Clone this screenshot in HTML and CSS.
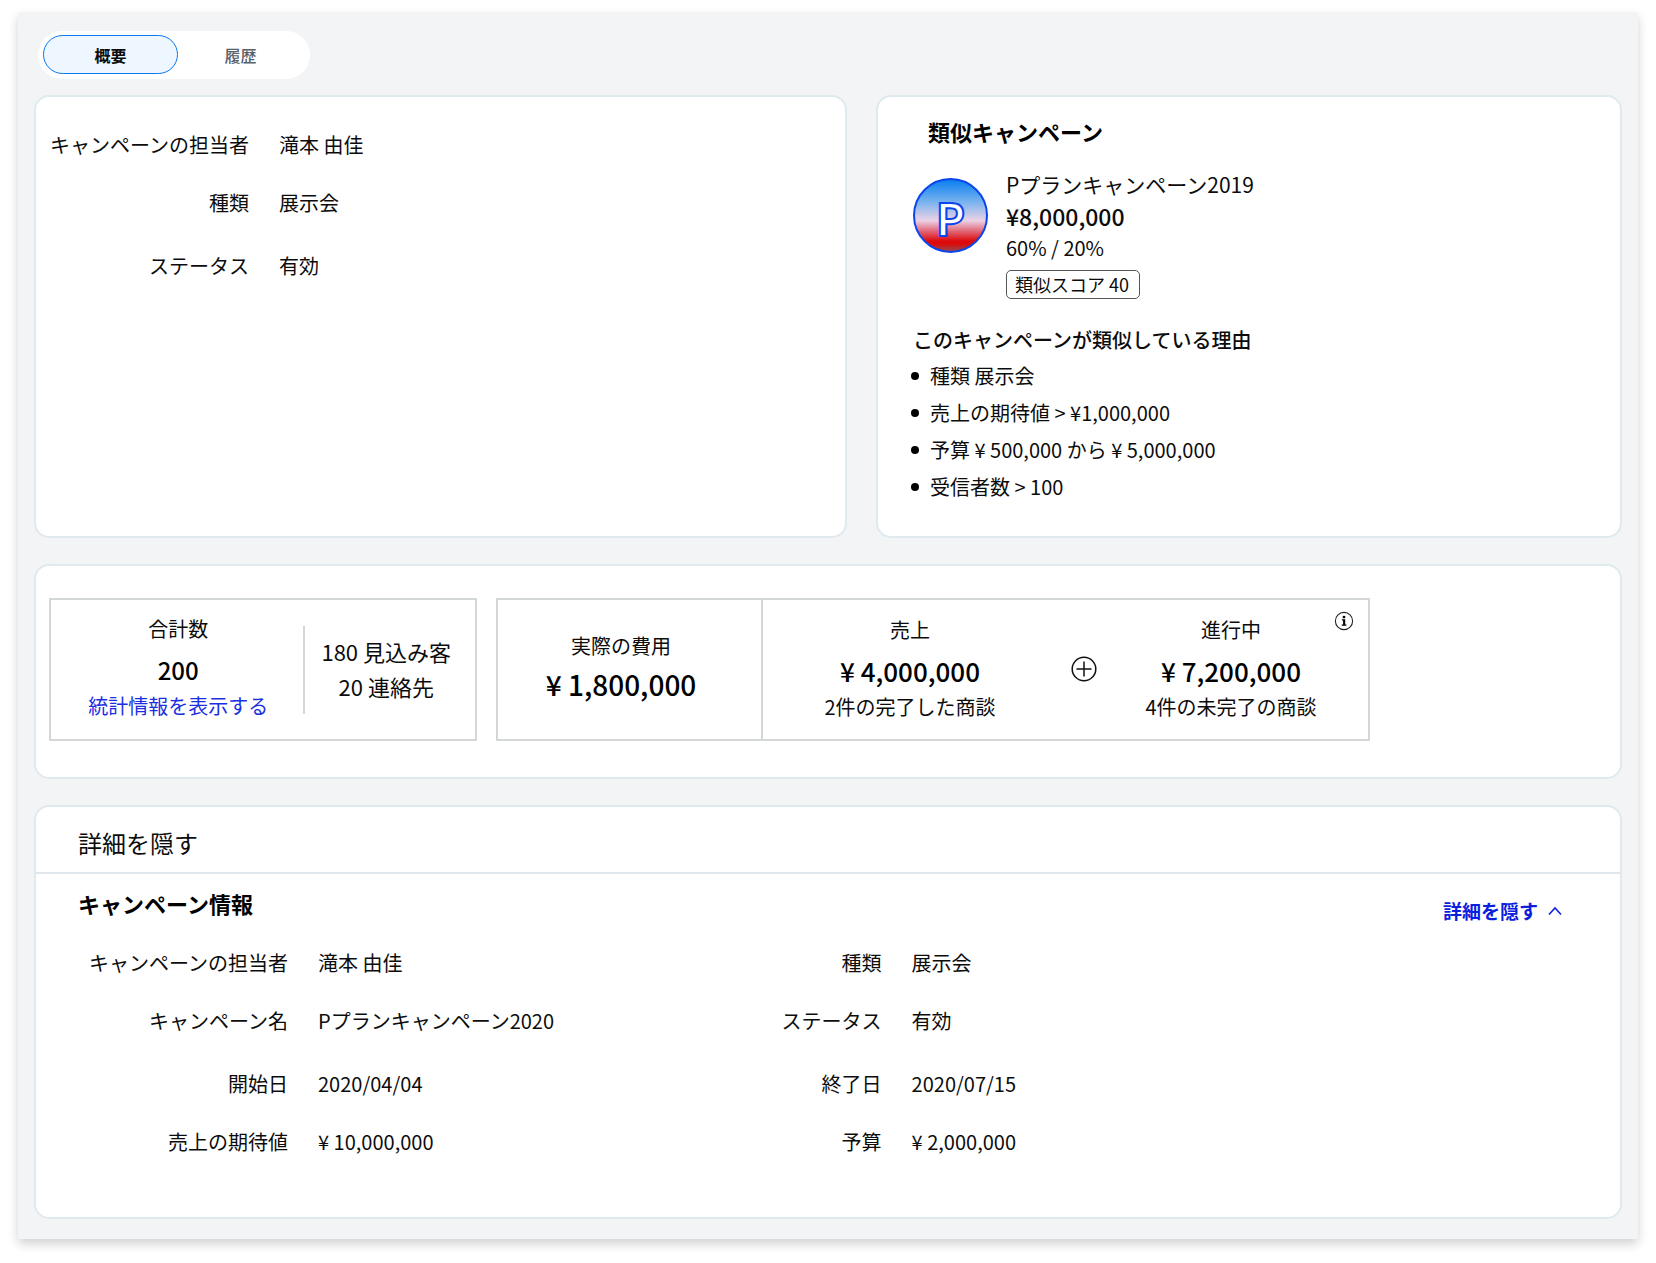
FILE: index.html
```html
<!DOCTYPE html>
<html lang="ja">
<head>
<meta charset="utf-8">
<meta name="viewport" content="width=device-width, initial-scale=1">
<title>キャンペーン概要</title>
<link rel="stylesheet" href="styles.css">
</head>
<body>
<main class="panel">
  <div class="tabs" role="tablist">
    <button class="tab tab-active" type="button" role="tab" aria-selected="true">概要</button>
    <button class="tab" type="button" role="tab" aria-selected="false">履歴</button>
  </div>

  <div class="overview">
    <section class="card summary">
      <dl class="fields">
        <dt>キャンペーンの担当者</dt><dd>滝本 由佳</dd>
        <dt>種類</dt><dd>展示会</dd>
        <dt>ステータス</dt><dd>有効</dd>
      </dl>
    </section>

    <section class="card similar">
      <h2 class="heading similar-title">類似キャンペーン</h2>
      <div class="campaign">
        <div class="avatar"><span>P</span></div>
        <div class="campaign-info">
          <p class="campaign-name">Pプランキャンペーン2019</p>
          <p class="campaign-amount">¥8,000,000</p>
          <p class="campaign-rate">60% / 20%</p>
          <p class="score">類似スコア 40</p>
        </div>
      </div>
      <h3 class="reason-title">このキャンペーンが類似している理由</h3>
      <ul class="reasons">
        <li>種類 展示会</li>
        <li>売上の期待値 &gt; ¥1,000,000</li>
        <li>予算 ¥ 500,000 から ¥ 5,000,000</li>
        <li>受信者数 &gt; 100</li>
      </ul>
    </section>
  </div>

  <section class="card stats">
    <div class="box members">
      <div class="members-total">
        <p class="label">合計数</p>
        <p class="amount total">200</p>
        <a class="label link" href="#">統計情報を表示する</a>
      </div>
      <div class="members-split">
        <p>180 見込み客</p>
        <p>20 連絡先</p>
      </div>
    </div>
    <div class="box money">
      <div class="cost">
        <p class="label">実際の費用</p>
        <p class="amount cost-amount">¥ 1,800,000</p>
      </div>
      <div class="revenue">
        <div class="sales">
          <p class="label">売上</p>
          <p class="amount">¥ 4,000,000</p>
          <p class="label">2件の完了した商談</p>
        </div>
        <svg class="plus" viewBox="0 0 26 26" aria-hidden="true"><circle cx="13" cy="13" r="11.8"/><path d="M13 5.5v15M5.5 13h15"/></svg>
        <div class="pending">
          <p class="label">進行中</p>
          <p class="amount">¥ 7,200,000</p>
          <p class="label">4件の未完了の商談</p>
        </div>
        <button class="info" type="button" aria-label="情報">
          <svg viewBox="0 0 20 20" aria-hidden="true"><circle cx="10" cy="10" r="8.6" fill="none" stroke="#222" stroke-width="1.1"/><circle cx="10" cy="6.1" r="1.4"/><path d="M7.9 8.2h3.3v5.3h1.2v1.2H7.7v-1.2h1.4V9.4H7.9z"/></svg>
        </button>
      </div>
    </div>
  </section>

  <section class="card details">
    <h2 class="details-header">詳細を隠す</h2>
    <div class="details-body">
      <div class="details-top">
        <h3 class="heading">キャンペーン情報</h3>
        <button class="toggle" type="button" aria-expanded="true">詳細を隠す
          <svg viewBox="0 0 14 10" aria-hidden="true"><path d="M1 8.500 7 2l6 6.500"/></svg>
        </button>
      </div>
      <div class="details-columns">
        <dl class="fields">
          <dt>キャンペーンの担当者</dt><dd>滝本 由佳</dd>
          <dt>キャンペーン名</dt><dd>Pプランキャンペーン2020</dd>
          <dt>開始日</dt><dd>2020/04/04</dd>
          <dt>売上の期待値</dt><dd>¥ 10,000,000</dd>
        </dl>
        <dl class="fields">
          <dt>種類</dt><dd>展示会</dd>
          <dt>ステータス</dt><dd>有効</dd>
          <dt>終了日</dt><dd>2020/07/15</dd>
          <dt>予算</dt><dd>¥ 2,000,000</dd>
        </dl>
      </div>
    </div>
  </section>
</main>
</body>
</html>
```
FILE: styles.css
```css
* {
  box-sizing: border-box;
}

body {
  margin: 0;
  padding: 12px 18px 24px;
  background: #fff;
  color: #0c0c0c;
  font-family: "Noto Sans CJK JP", sans-serif;
  font-size: 20px;
  line-height: 32px;
}

h2, h3, p, dl, dd, ul {
  margin: 0;
  padding: 0;
}

button {
  padding: 0;
  border: 0;
  background: none;
  color: inherit;
  font: inherit;
  cursor: pointer;
}

.panel {
  display: flex;
  flex-direction: column;
  gap: 26px;
  padding: 19px 16px 20px;
  background: #f2f4f6;
  box-shadow: 0 5px 10px rgba(0, 0, 0, 0.18);
}

/* Tabs */
.tabs {
  display: flex;
  align-self: flex-start;
  margin: 0 0 -10px 4px;
  padding: 4px 7px 5px 5px;
  border-radius: 24px;
  background: #fff;
}

.tab {
  width: 135px;
  height: 39px;
  border-radius: 20px;
  color: #56616c;
  font-size: 16px;
  font-weight: 500;
  line-height: 24px;
}

.tab:last-child {
  width: 125px;
}

.tab-active {
  border: 1px solid #0a78f0;
  background: #eef7ff;
  color: #0c0c0c;
  font-weight: 700;
}

/* Cards */
.card {
  border: 2px solid #deeaee;
  border-radius: 15px;
  background: #fff;
}

.heading {
  color: #000;
  font-size: 22px;
  font-weight: 700;
}

.overview {
  display: grid;
  grid-template-columns: 813fr 746fr;
  gap: 29px;
}

.fields {
  display: grid;
  grid-template-columns: 210px 1fr;
  grid-template-rows: 58px 63px 58px 32px;
  column-gap: 30px;
}

.fields dt {
  text-align: right;
}

.summary {
  padding: 32px 12px;
}

.summary .fields {
  grid-template-columns: 201px 1fr;
}

/* Similar campaign */
.similar {
  padding: 18px 35px 31px;
}

.similar-title {
  padding-left: 15px;
}

.campaign {
  display: flex;
  gap: 18px;
  margin-top: 21px;
}

.avatar {
  display: flex;
  align-items: center;
  justify-content: center;
  width: 75px;
  height: 75px;
  margin-top: 10px;
  border: 2px solid #0b45ee;
  border-radius: 50%;
  background: linear-gradient(#0a80f0, #7db4ee 32%, #ecd2e6 57%, #e06070 73%, #dd0a0c 86%, #dd0a0c 90%, #94484c);
}

.avatar span {
  padding-top: 2px;
  color: #fff;
  font-size: 44px;
  font-weight: 700;
  -webkit-text-stroke: 2px #0b45ee;
}

.campaign-name {
  font-size: 21px;
}

.campaign-amount {
  font-size: 23px;
  font-weight: 500;
}

.score {
  width: max-content;
  margin-top: 6px;
  padding: 0 10px 0 8px;
  border: 1px solid #555;
  border-radius: 5px;
  font-size: 18px;
  line-height: 27px;
}

.reason-title {
  margin-top: 25px;
  font-size: 20px;
  font-weight: 500;
}

.reasons {
  margin-top: 1px;
  list-style: none;
  line-height: 37px;
}

.reasons li {
  display: flex;
  align-items: center;
  gap: 11px;
  margin-left: -2px;
}

.reasons li::before {
  content: "";
  width: 8px;
  height: 8px;
  border-radius: 50%;
  background: #000;
}

/* Key figures */
.stats {
  display: flex;
  gap: 19px;
  padding: 32px 13px 36px;
}

.box {
  border: 2px solid #d3d7d7;
  text-align: center;
}

.members {
  display: flex;
  flex: 0 1 428px;
  align-items: center;
}

.members-total {
  display: flex;
  flex: 1;
  flex-direction: column;
  align-items: center;
  padding: 13px 0 17px 2px;
}

.members-split {
  padding: 8px 24px 10px 16px;
  border-left: 2px solid #d3d7d7;
  font-size: 22px;
  line-height: 35px;
}

.amount {
  margin-top: 5px;
  color: #000;
  font-size: 26px;
  font-weight: 500;
  line-height: 40px;
}

.total {
  font-size: 24px;
}

.link {
  color: #1a30e0;
  text-decoration: none;
}

.money {
  display: grid;
  flex: 0 1 874px;
  grid-template-columns: 263fr 607fr;
}

.cost {
  display: flex;
  flex-direction: column;
  justify-content: center;
  padding: 0 17px 6px 0;
}

.cost-amount {
  margin-top: 2px;
  font-size: 28px;
}

.revenue {
  display: flex;
  position: relative;
  align-items: center;
  padding: 0 17px 2px 0;
  border-left: 2px solid #d3d7d7;
}

.sales {
  flex: 294;
}

.plus {
  width: 26px;
  height: 26px;
  margin: 0 14px;
  fill: none;
  stroke: #111;
  stroke-width: 1.5;
}

.pending {
  flex: 240;
}

.info {
  position: absolute;
  top: 11px;
  right: 14px;
  width: 20px;
  height: 20px;
}

.info svg {
  display: block;
}

/* Details */
.details-header {
  padding: 20px 42px 13px;
  border-bottom: 2px solid #dfe7ec;
  font-size: 24px;
  font-weight: 400;
}

.details-body {
  padding: 13px 58px 59px 42px;
}

.details-top {
  display: flex;
  align-items: flex-start;
  justify-content: space-between;
}

.toggle {
  display: flex;
  align-items: center;
  gap: 10px;
  margin-top: 8px;
  color: #0a20dc;
  font-size: 19px;
  font-weight: 700;
}

.toggle svg {
  width: 14px;
  height: 10px;
  fill: none;
  stroke: currentColor;
  stroke-width: 1.6;
}

.details-columns {
  display: grid;
  grid-template-columns: 2fr 3fr;
  margin-top: 20px;
}
```
